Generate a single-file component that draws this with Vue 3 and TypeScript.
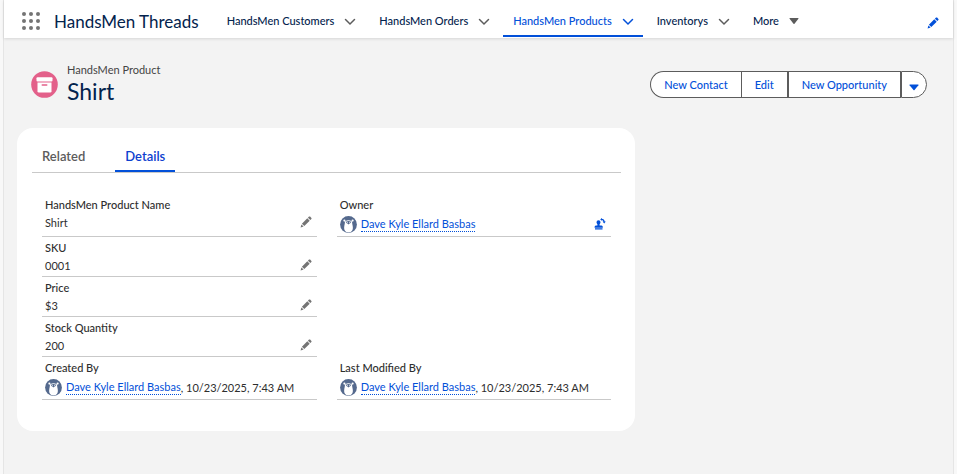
<script setup lang="ts">
import { ref } from 'vue'

interface NavItem {
  label: string
  active?: boolean
}

interface Field {
  label: string
  value?: string
  user?: string
  edit?: 'pencil' | 'owner'
}

const navItems: NavItem[] = [
  { label: 'HandsMen Customers' },
  { label: 'HandsMen Orders' },
  { label: 'HandsMen Products', active: true },
  { label: 'Inventorys' },
]

const actions: string[] = ['New Contact', 'Edit', 'New Opportunity']
const tabs: string[] = ['Related', 'Details']
const activeTab = ref('Details')

const owner = 'Dave Kyle Ellard Basbas'

const rows: (Field | null)[][] = [
  [
    { label: 'HandsMen Product Name', value: 'Shirt', edit: 'pencil' },
    { label: 'Owner', user: owner, edit: 'owner' },
  ],
  [{ label: 'SKU', value: '0001', edit: 'pencil' }, null],
  [{ label: 'Price', value: '$3', edit: 'pencil' }, null],
  [{ label: 'Stock Quantity', value: '200', edit: 'pencil' }, null],
  [
    { label: 'Created By', user: owner, value: '10/23/2025, 7:43 AM' },
    { label: 'Last Modified By', user: owner, value: '10/23/2025, 7:43 AM' },
  ],
]

const dots: number[][] = [0, 1, 2].flatMap((r) => [0, 1, 2].map((c) => [2 + c * 7, 2 + r * 7]))
</script>

<template>
  <div class="page">
    <header class="bar">
      <button class="icon-button launcher" type="button" aria-label="App Launcher">
        <svg width="18" height="18" viewBox="0 0 18 18">
          <circle v-for="(d, i) in dots" :key="i" :cx="d[0]" :cy="d[1]" r="2" fill="#747474" />
        </svg>
      </button>
      <span class="app-name">HandsMen Threads</span>
      <nav class="nav">
        <div v-for="item in navItems" :key="item.label" class="nav-item" :class="{ active: item.active }">
          <a href="#" class="nav-link">{{ item.label }}</a>
          <button class="icon-button" type="button" :aria-label="item.label + ' list'">
            <svg width="12" height="8" viewBox="0 0 12 8">
              <path d="M1.5 1.5 6 6l4.500-4.500" fill="none" stroke="currentColor" stroke-width="1.500" stroke-linecap="round" />
            </svg>
          </button>
        </div>
        <button class="nav-item more" type="button">
          <span class="nav-link">More</span>
          <svg width="10" height="8" viewBox="0 0 10 8"><path d="M.8 1h8.400q.5.200.200.700L5.500 6.700q-.5.500-1 0L.6 1.700Q.3 1.200.8 1z" fill="#5c5c5c" /></svg>
        </button>
      </nav>
      <button class="icon-button edit-nav" type="button" aria-label="Edit navigation">
        <svg width="12" height="12" viewBox="0 0 12 12" fill="#0250d9">
          <path d="M.6 11.400 1.400 8.400 3.600 10.600zM1.900 7.700 7.300 2.300 9.700 4.700 4.300 10.100zM7.900 1.700 9 .6q.6-.4 1.100 0l1.300 1.300q.4.600 0 1.100L10.300 4.100z" />
        </svg>
      </button>
    </header>

    <main class="content">
      <section class="record-head">
        <svg class="record-icon" width="27" height="27" viewBox="0 0 27 27">
          <circle cx="13.500" cy="13.500" r="13.300" fill="#e3608a" />
          <rect x="5.500" y="6.300" width="16" height="4.200" rx="1" fill="#fff" />
          <path d="M6.500 11.500h14v8.700q0 1.300-1.300 1.300H7.800q-1.300 0-1.300-1.300z" fill="#fff" />
          <rect x="10.500" y="13.200" width="6" height="1.600" rx=".8" fill="#e3608a" />
        </svg>
        <div class="record-title">
          <span class="record-type">HandsMen Product</span>
          <h1>Shirt</h1>
        </div>
        <div class="actions">
          <button v-for="a in actions" :key="a" type="button" class="action">{{ a }}</button>
          <button type="button" class="action action-more" aria-label="More actions">
            <svg width="10" height="8" viewBox="0 0 10 8"><path d="M.8 1.500h8.400q.5.200.200.700L5.500 7q-.5.500-1 0L.6 2.200Q.3 1.700.8 1.500z" fill="#0250d9" /></svg>
          </button>
        </div>
      </section>

      <div class="columns">
        <section class="card">
          <div class="tabs" role="tablist">
            <button
              v-for="t in tabs"
              :key="t"
              type="button"
              role="tab"
              class="tab"
              :class="{ selected: t === activeTab }"
              :aria-selected="t === activeTab"
              @click="activeTab = t"
            >{{ t }}</button>
          </div>

          <div class="fields">
            <div v-for="(row, r) in rows" :key="r" class="row">
              <template v-for="(f, c) in row" :key="c">
                <div v-if="f" class="field">
                  <div class="label">{{ f.label }}</div>
                  <div class="value" :class="{ 'value-user': f.user }">
                    <template v-if="f.user">
                      <svg class="avatar" width="17" height="17" viewBox="0 0 17 17">
                        <circle cx="8.500" cy="8.500" r="8.400" fill="#54698d" />
                        <circle cx="4.400" cy="4.600" r="1.100" fill="#fff" />
                        <circle cx="12.600" cy="4.600" r="1.100" fill="#fff" />
                        <path d="M5 5.500Q8.500 3 12 5.500 12.200 8 12.700 10q.8 4.500-2 6-2.200.8-4.400 0-2.800-1.500-2-6Q4.800 8 5 5.500z" fill="#fff" />
                        <path d="M6 5.800Q8.500 4.400 11 5.800 11 7.300 9.600 7.500L8.500 8.500 7.400 7.500Q6 7.300 6 5.800z" fill="#54698d" />
                        <circle cx="7.400" cy="6.300" r=".5" fill="#fff" />
                        <circle cx="9.600" cy="6.300" r=".5" fill="#fff" />
                      </svg>
                      <a href="#" class="user">{{ f.user }}</a>
                      <span v-if="f.value">, {{ f.value }}</span>
                    </template>
                    <span v-else>{{ f.value }}</span>
                    <button v-if="f.edit === 'pencil'" class="icon-button edit" type="button" :aria-label="'Edit ' + f.label">
                      <svg width="12" height="12" viewBox="0 0 12 12" fill="#747474">
                        <path d="M.6 11.400 1.400 8.400 3.600 10.600zM1.900 7.700 7.300 2.300 9.700 4.700 4.300 10.100zM7.900 1.700 9 .6q.6-.4 1.100 0l1.300 1.300q.4.600 0 1.100L10.300 4.100z" />
                      </svg>
                    </button>
                    <button v-if="f.edit === 'owner'" class="icon-button edit" type="button" aria-label="Change owner">
                      <svg width="12" height="12" viewBox="0 0 12 12">
                        <path d="M4.500 2.200q2 0 2 2.100 0 1.200-.9 2v1.200h1.900q1.300.2 1.300 1.500v.8H.6V9q0-1.300 1.300-1.500h1.500V6.300q-.9-.8-.9-2 0-2.100 2-2.100zM1 10.300h7.500v1.200H1z" fill="#0250d9" />
                        <path d="M7 1.500Q9.800 1.200 10.200 4" fill="none" stroke="#0250d9" stroke-width="1.200" />
                        <path d="M8.600 3.600h3.200l-1.600 2zM8 .1v2.700L6.200 1.400z" fill="#0250d9" />
                      </svg>
                    </button>
                  </div>
                </div>
              </template>
            </div>
          </div>
        </section>
      </div>
    </main>
  </div>
</template>

<style>
body {
  background: #f8f8f8;
}
</style>

<style scoped>
.page {
  box-sizing: border-box;
  min-height: 100vh;
  margin: 0 3px;
  border: solid #e5e5e5;
  border-width: 0 1px;
  background: #f3f3f3;
  color: #2e2e2e;
  font-family: 'Segoe UI', Lato, 'Noto Sans', sans-serif;
  font-size: 11px;
  line-height: 16px;
}

button {
  font: inherit;
  color: inherit;
  cursor: pointer;
}

svg {
  display: block;
  flex: none;
}

.icon-button {
  display: flex;
  padding: 0;
  border: 0;
  background: none;
}

.bar {
  display: flex;
  align-items: center;
  height: 38px;
  padding: 0 14px 0 18px;
  background: #fff;
  box-shadow: 0 1px 3px rgba(0, 0, 0, 0.12);
}

.launcher {
  margin-top: 4px;
}

.app-name {
  margin: 6px 18px 0 14px;
  color: #03234d;
  font-size: 17px;
  line-height: 24px;
  white-space: nowrap;
}

.nav {
  display: flex;
  align-self: stretch;
  gap: 4px;
}

.nav-item {
  display: flex;
  align-items: center;
  gap: 10px;
  padding: 6px 9px 0 10px;
  border: solid transparent;
  border-width: 0 0 2px;
  margin-bottom: 1px;
  background: none;
  color: #5c5c5c;
}

.nav-link {
  color: #03234d;
  font-weight: 500;
  text-decoration: none;
  white-space: nowrap;
}

.nav-item.active,
.active .nav-link {
  color: #0250d9;
}

.nav-item.active {
  border-color: #0250d9;
}

.nav-item .icon-button {
  margin-top: 2px;
}

.edit-nav {
  margin: 7px 0 0 auto;
}

.content {
  padding: 23px 13px 43px;
}

.record-head {
  display: flex;
  align-items: flex-start;
  padding: 0 13px 0 14px;
}

.record-icon {
  margin-top: 10px;
}

.record-title {
  margin-left: 9px;
}

.record-type {
  display: block;
  margin-top: 1px;
  color: #444;
}

h1 {
  margin: 0;
  color: #03234d;
  font-size: 23px;
  font-weight: 400;
  line-height: 26px;
}

.actions {
  display: flex;
  margin: 10px 0 0 auto;
}

.action {
  display: flex;
  align-items: center;
  height: 27px;
  padding: 0 13px;
  border: 1px solid #5c5c5c;
  background: #fff;
  color: #0250d9;
  font-weight: 500;
  white-space: nowrap;
}

.action:first-child {
  border-right: 0;
  border-radius: 14px 0 0 14px;
}

.action-more {
  padding: 4px 7px 0;
  border-radius: 0 14px 14px 0;
}

.columns {
  display: grid;
  grid-template-columns: 67fr 33fr;
  margin-top: 24px;
}

.card {
  padding: 19px 14px 31px 15px;
  border-radius: 16px;
  background: #fff;
}

.tabs {
  display: flex;
  gap: 20px;
  border-bottom: 1px solid #c9c9c9;
}

.tab {
  padding: 0 10px 5px;
  border: solid transparent;
  border-width: 0 0 2px;
  background: none;
  color: #5c5c5c;
  font-size: 13px;
  font-weight: 600;
  line-height: 18px;
}

.tab.selected {
  border-color: #0250d9;
  color: #0c40cf;
}

.fields {
  padding: 21px 10px 0;
}

.row {
  display: grid;
  grid-template-columns: 1fr 1fr;
  gap: 20px;
}

.field {
  padding: 3px 5px 0 3px;
  border-bottom: 1px solid #c9c9c9;
}

.label {
  font-weight: 500;
}

.value {
  display: flex;
  align-items: center;
  height: 20px;
}

.value-user {
  height: 23px;
}

.avatar {
  margin-right: 4px;
}

.user {
  color: #0250d9;
  border-bottom: 1px dotted #0250d9;
  line-height: 14px;
  text-decoration: none;
}

.edit {
  margin: 0 0 2px auto;
}
</style>
